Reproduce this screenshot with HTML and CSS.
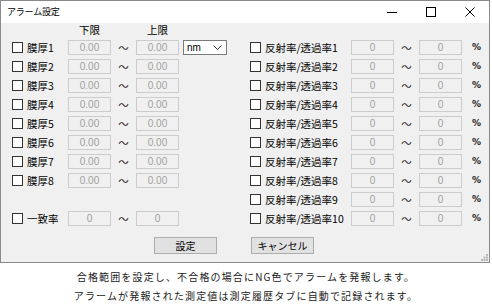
FILE: index.html
```html
<!DOCTYPE html>
<html lang="ja">
<head>
    <meta charset="UTF-8">
    <meta name="viewport" content="width=device-width, initial-scale=1.0">
    <title>アラーム設定</title>
    <link rel="stylesheet" href="styles.css">
</head>
<body>
<div class="window">
    <div class="titlebar">
        <span class="title">アラーム設定</span>
        <div class="controls">
            <span class="ctl"><svg width="10" height="10" viewBox="0 0 10 10"><path d="M0 5.5h10" stroke="#000" stroke-width="1"/></svg></span>
            <span class="ctl"><svg width="10" height="10" viewBox="0 0 10 10"><rect x="0.5" y="0.5" width="9" height="9" fill="none" stroke="#000" stroke-width="1"/></svg></span>
            <span class="ctl"><svg width="10" height="10" viewBox="0 0 10 10"><path d="M0.5 0.5l9 9M9.5 0.5l-9 9" stroke="#000" stroke-width="1"/></svg></span>
        </div>
    </div>

    <div class="body">
        <div class="columns">
            <div class="col left">
                <div class="head"><span class="lim">下限</span><span class="lim">上限</span></div>

                <div class="row">
                    <span class="check"></span><span class="label">膜厚1</span>
                    <input class="box" value="0.00" disabled><span class="tilde">～</span><input class="box" value="0.00" disabled>
                    <div class="select">nm<svg width="9" height="5" viewBox="0 0 9 5"><path d="M0.5 0.5l4 4 4-4" fill="none" stroke="#333" stroke-width="1"/></svg></div>
                </div>
                <div class="row">
                    <span class="check"></span><span class="label">膜厚2</span>
                    <input class="box" value="0.00" disabled><span class="tilde">～</span><input class="box" value="0.00" disabled>
                </div>
                <div class="row">
                    <span class="check"></span><span class="label">膜厚3</span>
                    <input class="box" value="0.00" disabled><span class="tilde">～</span><input class="box" value="0.00" disabled>
                </div>
                <div class="row">
                    <span class="check"></span><span class="label">膜厚4</span>
                    <input class="box" value="0.00" disabled><span class="tilde">～</span><input class="box" value="0.00" disabled>
                </div>
                <div class="row">
                    <span class="check"></span><span class="label">膜厚5</span>
                    <input class="box" value="0.00" disabled><span class="tilde">～</span><input class="box" value="0.00" disabled>
                </div>
                <div class="row">
                    <span class="check"></span><span class="label">膜厚6</span>
                    <input class="box" value="0.00" disabled><span class="tilde">～</span><input class="box" value="0.00" disabled>
                </div>
                <div class="row">
                    <span class="check"></span><span class="label">膜厚7</span>
                    <input class="box" value="0.00" disabled><span class="tilde">～</span><input class="box" value="0.00" disabled>
                </div>
                <div class="row">
                    <span class="check"></span><span class="label">膜厚8</span>
                    <input class="box" value="0.00" disabled><span class="tilde">～</span><input class="box" value="0.00" disabled>
                </div>
                <div class="row"></div>
                <div class="row">
                    <span class="check"></span><span class="label">一致率</span>
                    <input class="box" value="0" disabled><span class="tilde">～</span><input class="box" value="0" disabled>
                </div>
            </div>

            <div class="col right">
                <div class="row">
                    <span class="check"></span><span class="label">反射率/透過率1</span>
                    <input class="box" value="0" disabled><span class="tilde">～</span><input class="box" value="0" disabled><span class="pct">%</span>
                </div>
                <div class="row">
                    <span class="check"></span><span class="label">反射率/透過率2</span>
                    <input class="box" value="0" disabled><span class="tilde">～</span><input class="box" value="0" disabled><span class="pct">%</span>
                </div>
                <div class="row">
                    <span class="check"></span><span class="label">反射率/透過率3</span>
                    <input class="box" value="0" disabled><span class="tilde">～</span><input class="box" value="0" disabled><span class="pct">%</span>
                </div>
                <div class="row">
                    <span class="check"></span><span class="label">反射率/透過率4</span>
                    <input class="box" value="0" disabled><span class="tilde">～</span><input class="box" value="0" disabled><span class="pct">%</span>
                </div>
                <div class="row">
                    <span class="check"></span><span class="label">反射率/透過率5</span>
                    <input class="box" value="0" disabled><span class="tilde">～</span><input class="box" value="0" disabled><span class="pct">%</span>
                </div>
                <div class="row">
                    <span class="check"></span><span class="label">反射率/透過率6</span>
                    <input class="box" value="0" disabled><span class="tilde">～</span><input class="box" value="0" disabled><span class="pct">%</span>
                </div>
                <div class="row">
                    <span class="check"></span><span class="label">反射率/透過率7</span>
                    <input class="box" value="0" disabled><span class="tilde">～</span><input class="box" value="0" disabled><span class="pct">%</span>
                </div>
                <div class="row">
                    <span class="check"></span><span class="label">反射率/透過率8</span>
                    <input class="box" value="0" disabled><span class="tilde">～</span><input class="box" value="0" disabled><span class="pct">%</span>
                </div>
                <div class="row">
                    <span class="check"></span><span class="label">反射率/透過率9</span>
                    <input class="box" value="0" disabled><span class="tilde">～</span><input class="box" value="0" disabled><span class="pct">%</span>
                </div>
                <div class="row">
                    <span class="check"></span><span class="label">反射率/透過率10</span>
                    <input class="box" value="0" disabled><span class="tilde">～</span><input class="box" value="0" disabled><span class="pct">%</span>
                </div>
            </div>
        </div>

        <div class="buttons">
            <button class="btn">設定</button>
            <button class="btn">キャンセル</button>
        </div>

        <svg class="grip" width="7" height="7" viewBox="0 0 7 7" fill="#b8b8b8">
            <rect x="5" y="0" width="2" height="2"/>
            <rect x="2.5" y="2.5" width="2" height="2"/><rect x="5" y="2.5" width="2" height="2"/>
            <rect x="0" y="5" width="2" height="2"/><rect x="2.5" y="5" width="2" height="2"/><rect x="5" y="5" width="2" height="2"/>
        </svg>
    </div>
</div>

<p class="note">合格範囲を設定し、不合格の場合にNG色でアラームを発報します。<br>アラームが発報された測定値は測定履歴タブに自動で記録されます。</p>
</body>
</html>
```

FILE: styles.css
```css
body {
    margin: 0;
    background: #fff;
    font-family: "Noto Sans CJK JP", "Noto Sans", sans-serif;
    color: #000;
}

.window {
    position: relative;
    width: 490px;
    box-sizing: border-box;
    border: 1px solid #8a8a8a;
    background: #f0f0f0;
}

.titlebar {
    display: flex;
    align-items: center;
    justify-content: space-between;
    height: 22px;
    background: #fff;
}
.title {
    padding-left: 6px;
    font-size: 9px;
    letter-spacing: -0.2px;
    line-height: 22px;
}
.controls {
    display: flex;
    height: 22px;
}
.ctl {
    display: flex;
    align-items: center;
    justify-content: center;
    width: 39px;
    height: 22px;
}

.body {
    padding-bottom: 8px;
}

.columns {
    display: flex;
}
.col {
    display: flex;
    flex-direction: column;
    gap: 4px;
}
.left {
    width: 249px;
    box-sizing: border-box;
    padding-left: 11px;
}
.right {
    padding-top: 17px;
}

.head {
    display: flex;
    align-items: center;
    height: 13px;
    padding-left: 56px;
    font-size: 10.5px;
    line-height: 13px;
}
.lim {
    width: 43px;
    text-align: center;
}
.lim + .lim {
    margin-left: 25px;
}

.row {
    display: flex;
    align-items: center;
    height: 15px;
    font-size: 10.5px;
    line-height: 15px;
}

.check {
    width: 11px;
    height: 11px;
    box-sizing: border-box;
    border: 1px solid #333;
    background: #fff;
    margin-right: 4px;
}
.label {
    width: 41px;
    white-space: nowrap;
}
.right .label {
    width: 86px;
}

.box {
    width: 43px;
    height: 15px;
    box-sizing: border-box;
    margin: 0;
    padding: 0;
    border: 1px solid #cccccc;
    background: #f0f0f0;
    color: #a0a0a0;
    font-family: "Liberation Sans", sans-serif;
    font-size: 10px;
    text-align: center;
}
.tilde {
    width: 25px;
    text-align: center;
    color: #222;
}
.pct {
    margin-left: 10px;
    font-family: "DejaVu Sans", sans-serif;
    font-size: 9px;
    font-weight: bold;
    color: #222;
}

.select {
    display: flex;
    align-items: center;
    justify-content: space-between;
    width: 44px;
    height: 15px;
    box-sizing: border-box;
    margin-left: 4px;
    padding: 0 4px 0 3px;
    border: 1px solid #7a7a7a;
    background: #fff;
    font-family: "Liberation Sans", sans-serif;
    font-size: 10px;
}

.buttons {
    display: flex;
    gap: 34px;
    margin-top: 11px;
    padding-left: 153px;
}
.btn {
    width: 63px;
    height: 17px;
    padding: 0;
    border: 1px solid #adadad;
    background: #e1e1e1;
    font-family: "Noto Sans CJK JP", sans-serif;
    font-size: 10px;
    line-height: 15px;
    color: #000;
}

.grip {
    position: absolute;
    right: 1px;
    bottom: 1px;
}

.note {
    margin: 4px 0 0;
    text-align: center;
    font-size: 10px;
    line-height: 19px;
    letter-spacing: 1.15px;
    color: #222;
}
```
